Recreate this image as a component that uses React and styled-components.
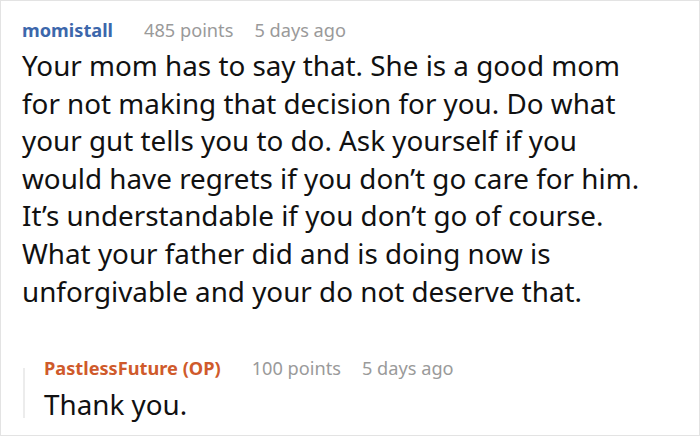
import React from "react";
import styled, { createGlobalStyle } from "styled-components";

const Global = createGlobalStyle`
  html, body { margin: 0; padding: 0; background: #fff; }
  * { box-sizing: border-box; }
`;

const Frame = styled.div`
  width: 700px;
  height: 436px;
  border: 1px solid #e3e3e3;
  background: #fff;
  padding: 17px 20px 0 21px;
  font-family: "Noto Sans", "Open Sans", sans-serif;
  overflow: hidden;
`;

const Meta = styled.div`
  display: flex;
  align-items: baseline;
  gap: 21px;
  font-size: 18.2px;
  line-height: 24px;
  color: #9a9a9a;
  white-space: nowrap;
`;

const Author = styled.span`
  font-weight: 700;
  color: ${(p) => (p.$op ? "#cf5a2b" : "#3c67ab")};
  margin-right: 10px;
`;

const Body = styled.p`
  margin: 5px 0 0;
  font-size: 27.8px;
  line-height: 37.6px;
  color: #111;
  white-space: nowrap;
`;

const Reply = styled.div`
  position: relative;
  margin-top: 46px;
  padding-left: 22px;
  &::before {
    content: "";
    position: absolute;
    left: 1px;
    top: 12px;
    height: 50px;
    width: 2px;
    background: #ececec;
  }
`;

const ReplyBody = styled(Body)`
  margin-top: 6px;
`;

export default function App() {
  return (
    <>
      <Global />
      <Frame>
        <Meta>
          <Author>momistall</Author>
          <span>485 points</span>
          <span>5 days ago</span>
        </Meta>
        <Body>
          Your mom has to say that. She is a good mom
          <br />
          for not making that decision for you. Do what
          <br />
          your gut tells you to do. Ask yourself if you
          <br />
          would have regrets if you don’t go care for him.
          <br />
          It’s understandable if you don’t go of course.
          <br />
          What your father did and is doing now is
          <br />
          unforgivable and your do not deserve that.
        </Body>
        <Reply>
          <Meta>
            <Author $op>PastlessFuture (OP)</Author>
            <span>100 points</span>
            <span>5 days ago</span>
          </Meta>
          <ReplyBody>Thank you.</ReplyBody>
        </Reply>
      </Frame>
    </>
  );
}
